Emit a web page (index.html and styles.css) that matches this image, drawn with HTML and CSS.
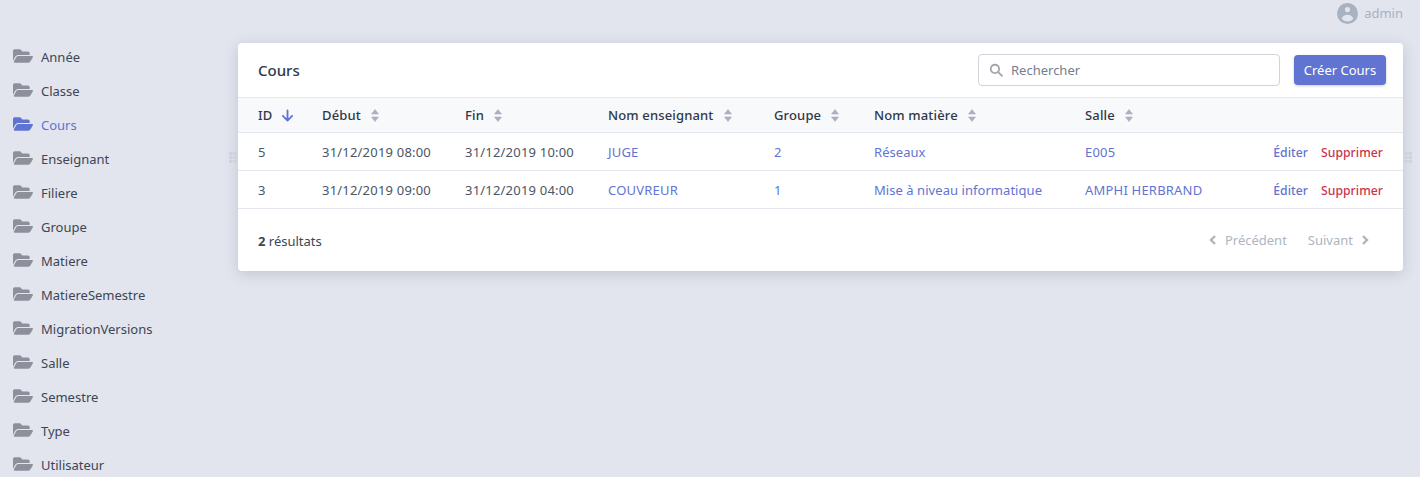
FILE: index.html
```html
<!DOCTYPE html>
<html lang="fr">
<head>
    <meta charset="UTF-8">
    <title>Cours</title>
    <link rel="stylesheet" href="styles.css">
</head>
<body>
    <!-- Shared icons -->
    <svg class="sprite" xmlns="http://www.w3.org/2000/svg">
        <symbol id="folder" viewBox="0 0 576 512">
            <path fill="currentColor" d="M572.694 292.093L500.27 416.248A63.997 63.997 0 0 1 444.989 448H45.025c-18.523 0-30.064-20.093-20.731-36.093l72.424-124.155A64 64 0 0 1 152 256h399.964c18.523 0 30.064 20.093 20.73 36.093zM152 224h328v-48c0-26.51-21.49-48-48-48H272l-64-64H48C21.49 64 0 85.49 0 112v278.046l69.077-118.418C86.214 242.25 117.989 224 152 224z"/>
        </symbol>
        <symbol id="sort" viewBox="0 0 8 13">
            <path fill="currentColor" stroke="currentColor" stroke-width="0.600" stroke-linejoin="round" d="M4 .5l3.500 4.500H.5zM4 12.500L.5 8h7z"/>
        </symbol>
        <symbol id="grip" viewBox="0 0 8 11">
            <path fill="currentColor" d="M0 0h3.500v3H0zM4.500 0H8v3H4.500zM0 4h3.500v3H0zM4.500 4H8v3H4.500zM0 8h3.500v3H0zM4.500 8H8v3H4.500z"/>
        </symbol>
    </svg>

    <header class="topbar">
        <svg class="avatar" viewBox="2 2 16 16"><path fill="currentColor" fill-rule="evenodd" d="M18 10a8 8 0 11-16 0 8 8 0 0116 0zm-6-3a2 2 0 11-4 0 2 2 0 014 0zm-2 4a5 5 0 00-4.546 2.916A5.986 5.986 0 0010 16a5.986 5.986 0 004.546-2.084A5 5 0 0010 11z"/></svg>
        <span>admin</span>
    </header>

    <div class="layout">
        <nav class="sidebar">
            <a class="nav-item" href="#"><svg class="folder"><use href="#folder"/></svg>Année</a>
            <a class="nav-item" href="#"><svg class="folder"><use href="#folder"/></svg>Classe</a>
            <a class="nav-item active" href="#"><svg class="folder"><use href="#folder"/></svg>Cours</a>
            <a class="nav-item" href="#"><svg class="folder"><use href="#folder"/></svg>Enseignant</a>
            <a class="nav-item" href="#"><svg class="folder"><use href="#folder"/></svg>Filiere</a>
            <a class="nav-item" href="#"><svg class="folder"><use href="#folder"/></svg>Groupe</a>
            <a class="nav-item" href="#"><svg class="folder"><use href="#folder"/></svg>Matiere</a>
            <a class="nav-item" href="#"><svg class="folder"><use href="#folder"/></svg>MatiereSemestre</a>
            <a class="nav-item" href="#"><svg class="folder"><use href="#folder"/></svg>MigrationVersions</a>
            <a class="nav-item" href="#"><svg class="folder"><use href="#folder"/></svg>Salle</a>
            <a class="nav-item" href="#"><svg class="folder"><use href="#folder"/></svg>Semestre</a>
            <a class="nav-item" href="#"><svg class="folder"><use href="#folder"/></svg>Type</a>
            <a class="nav-item" href="#"><svg class="folder"><use href="#folder"/></svg>Utilisateur</a>
        </nav>

        <main class="card">
            <svg class="grip grip-left"><use href="#grip"/></svg>
            <svg class="grip grip-right"><use href="#grip"/></svg>

            <div class="card-head">
                <h1>Cours</h1>
                <label class="search">
                    <svg viewBox="0 0 20 20" fill="none" stroke="currentColor" stroke-width="2.600" stroke-linecap="round"><circle cx="8.500" cy="8.500" r="6"/><path d="M13.500 13.500l5 5"/></svg>
                    <input type="text" placeholder="Rechercher">
                </label>
                <button class="btn-create" type="button">Créer Cours</button>
            </div>

            <table>
                <colgroup>
                    <col class="c-id"><col class="c-date"><col class="c-date"><col class="c-teacher">
                    <col class="c-group"><col class="c-subject"><col class="c-room"><col>
                </colgroup>
                <thead>
                    <tr>
                        <th>ID<svg class="arrow" viewBox="0 0 14 14" fill="none" stroke="currentColor" stroke-width="2" stroke-linecap="round" stroke-linejoin="round"><path d="M7 1.500v11M2 7.500l5 5 5-5"/></svg></th>
                        <th>Début<svg class="sort"><use href="#sort"/></svg></th>
                        <th>Fin<svg class="sort"><use href="#sort"/></svg></th>
                        <th>Nom enseignant<svg class="sort"><use href="#sort"/></svg></th>
                        <th>Groupe<svg class="sort"><use href="#sort"/></svg></th>
                        <th>Nom matière<svg class="sort"><use href="#sort"/></svg></th>
                        <th>Salle<svg class="sort"><use href="#sort"/></svg></th>
                        <th></th>
                    </tr>
                </thead>
                <tbody>
                    <tr>
                        <td>5</td>
                        <td class="wide">31/12/2019 08:00</td>
                        <td class="wide">31/12/2019 10:00</td>
                        <td class="wide"><a href="#">JUGE</a></td>
                        <td><a href="#">2</a></td>
                        <td><a href="#">Réseaux</a></td>
                        <td class="wide"><a href="#">E005</a></td>
                        <td class="actions"><a class="edit" href="#">Éditer</a><a class="delete" href="#">Supprimer</a></td>
                    </tr>
                    <tr>
                        <td>3</td>
                        <td class="wide">31/12/2019 09:00</td>
                        <td class="wide">31/12/2019 04:00</td>
                        <td class="wide"><a href="#">COUVREUR</a></td>
                        <td><a href="#">1</a></td>
                        <td><a href="#">Mise à niveau informatique</a></td>
                        <td class="wide"><a href="#">AMPHI HERBRAND</a></td>
                        <td class="actions"><a class="edit" href="#">Éditer</a><a class="delete" href="#">Supprimer</a></td>
                    </tr>
                </tbody>
            </table>

            <div class="card-foot">
                <p><strong>2</strong> résultats</p>
                <div class="pager">
                    <span class="page-link"><svg viewBox="0 0 8 10" fill="none" stroke="currentColor" stroke-width="2.400"><path d="M6 1L2 5l4 4"/></svg>Précédent</span>
                    <span class="page-link">Suivant<svg viewBox="0 0 8 10" fill="none" stroke="currentColor" stroke-width="2.400"><path d="M2 1l4 4-4 4"/></svg></span>
                </div>
            </div>
        </main>
    </div>
</body>
</html>
```

FILE: styles.css
```css
* {
    box-sizing: border-box;
}

html, body {
    height: 477px;
    overflow: hidden;
}

body {
    margin: 0;
    background-color: #e2e5ed;
    color: #3c4655;
    font-family: "Noto Sans", "Open Sans", Arial, sans-serif;
    font-size: 13px;
}

a {
    text-decoration: none;
}

.sprite {
    display: none;
}

.topbar {
    height: 26px;
    padding: 0 17px 0 0;
    display: flex;
    justify-content: flex-end;
    align-items: center;
    gap: 6px;
    color: #a8b2c1;
}

.avatar {
    width: 21px;
    height: 21px;
}

.layout {
    display: flex;
    align-items: flex-start;
    padding: 14px 17px 0 13px;
}

.sidebar {
    width: 225px;
    flex-shrink: 0;
}

.nav-item {
    height: 34px;
    display: flex;
    align-items: center;
    gap: 8px;
    color: #3c4655;
}

.nav-item .folder {
    width: 20px;
    height: 18px;
    color: #8d909b;
    margin-top: -3px;
}

.nav-item.active,
.nav-item.active .folder {
    color: #5f73d3;
}

.card {
    position: relative;
    flex: 1;
    margin-top: 3px;
    background: #fff;
    border-radius: 4px;
    box-shadow: 0 3px 14px rgba(60, 70, 100, 0.2);
}

.grip {
    position: absolute;
    top: 109px;
    width: 8px;
    height: 11px;
    color: #cfd2da;
}

.grip-left {
    left: -9px;
}

.grip-right {
    right: -9px;
}

.card-head {
    height: 54px;
    padding: 0 17px 0 20px;
    display: flex;
    align-items: center;
}

.card-head h1 {
    margin: 0 auto 0 0;
    font-size: 15px;
    font-weight: 500;
    color: #2f3848;
}

.search {
    width: 302px;
    height: 32px;
    margin-right: 14px;
    padding: 0 10px;
    display: flex;
    align-items: center;
    gap: 8px;
    border: 1px solid #cfd3da;
    border-radius: 4px;
    color: #a3a6ad;
}

.search svg {
    width: 14px;
    height: 14px;
    flex-shrink: 0;
}

.search input {
    flex: 1;
    min-width: 0;
    border: none;
    outline: none;
    padding: 0;
    font: inherit;
    color: #3c4655;
}

.search input::placeholder {
    color: #767e8c;
    opacity: 1;
}

.btn-create {
    width: 92px;
    height: 30px;
    padding: 0;
    border: none;
    border-radius: 4px;
    background-color: #6174d1;
    color: #fff;
    font: inherit;
    box-shadow: 0 1px 3px rgba(0, 0, 0, 0.2);
}

table {
    width: 100%;
    table-layout: fixed;
    border-collapse: collapse;
}

.c-id { width: 64px; }
.c-date { width: 143px; }
.c-teacher { width: 166px; }
.c-group { width: 100px; }
.c-subject { width: 211px; }
.c-room { width: 170px; }

th, td {
    padding: 0 0 0 20px;
    text-align: left;
    white-space: nowrap;
}

th {
    height: 35px;
    background-color: #f8f9fb;
    border-top: 1px solid #e4e7ed;
    border-bottom: 1px solid #e4e7ed;
    font-weight: 500;
    letter-spacing: 0.15px;
    color: #2f3848;
}

th svg {
    vertical-align: -2px;
}

.sort {
    width: 8px;
    height: 13px;
    margin-left: 10px;
    color: #aab1bd;
}

.arrow {
    width: 13px;
    height: 13px;
    margin-left: 9px;
    color: #6174d1;
}

td {
    height: 38px;
    border-bottom: 1px solid #e4e7ed;
    color: #4b5563;
    line-height: 18px;
    letter-spacing: 0.05px;
}

/* dates and capitals run a little wider in the reference */
td.wide {
    letter-spacing: 0.2px;
}

td a {
    color: #6174d1;
}

.actions {
    padding: 2px 20px 0 0;
    text-align: right;
    font-size: 12.2px;
}

.actions .edit {
    font-weight: 500;
}

.actions .delete {
    margin-left: 13px;
    color: #c9354f;
    font-weight: 500;
}

.card-foot {
    height: 62px;
    padding: 0 34px 0 20px;
    display: flex;
    justify-content: space-between;
    align-items: center;
}

.card-foot p {
    margin: 2px 0 0;
}

.card-foot strong {
    font-weight: 700;
}

.pager {
    display: flex;
    gap: 21px;
}

.page-link {
    display: flex;
    align-items: center;
    gap: 8px;
    color: #aeb5c0;
}

.page-link svg {
    width: 8px;
    height: 10px;
    color: #aeb5c0;
}
```
